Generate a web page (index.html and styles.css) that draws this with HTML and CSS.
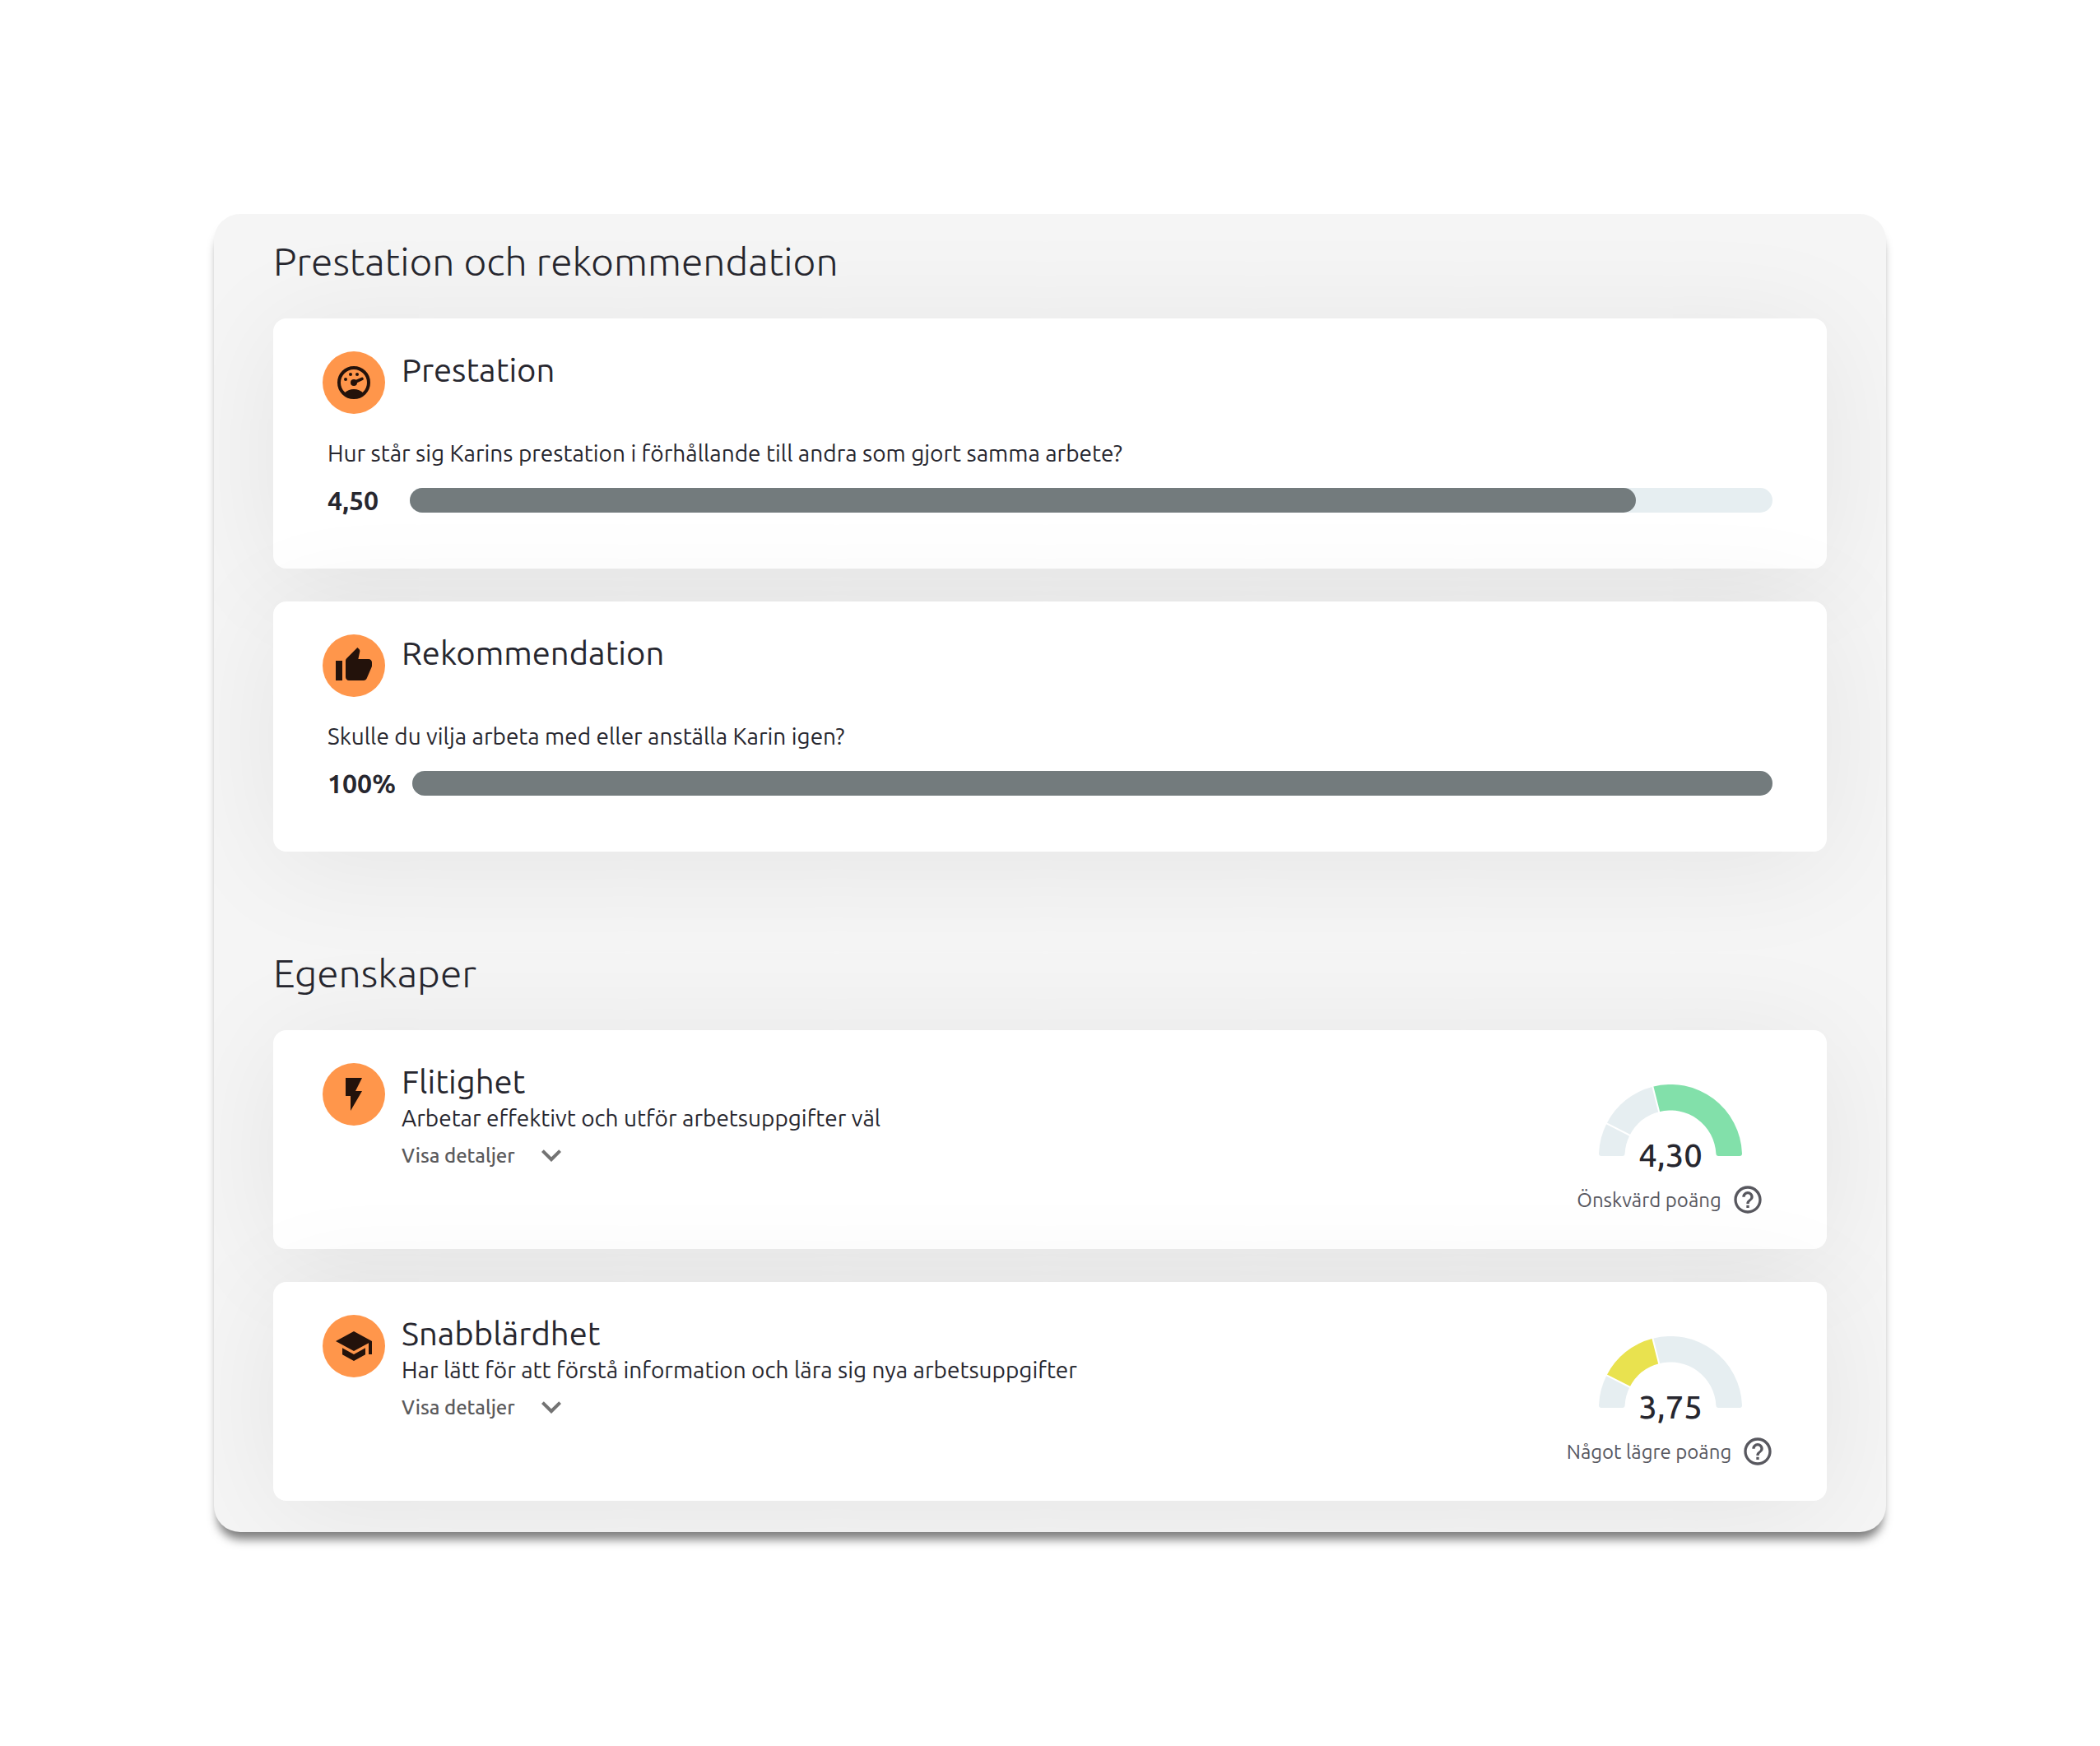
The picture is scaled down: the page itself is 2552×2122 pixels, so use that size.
FILE: index.html
```html
<!DOCTYPE html>
<html lang="sv">
<head>
    <meta charset="UTF-8">
    <meta name="viewport" content="width=device-width, initial-scale=1.0">
    <title>Prestation och rekommendation</title>
    <link rel="stylesheet" href="styles.css">
</head>
<body>
    <main class="panel">
        <section class="section">
            <h1 class="section-title">Prestation och rekommendation</h1>

            <article class="card">
                <div class="card-header">
                    <span class="badge">
                        <svg viewBox="0 0 24 24" aria-hidden="true">
                            <circle cx="12" cy="12" r="9" fill="none" stroke="currentColor" stroke-width="2"/>
                            <path d="M6.2 18.4C7.700 16.800 9.700 16 12 16s4.300.8 5.800 2.400C16.300 20.200 14.300 21 12 21s-4.300-.8-5.800-2.600z"/>
                            <circle cx="12" cy="12" r="2"/>
                            <path d="M12 12l5-2.300" fill="none" stroke="currentColor" stroke-width="1.800" stroke-linecap="round"/>
                            <circle cx="7" cy="10" r="1"/>
                            <circle cx="10" cy="7" r="1"/>
                            <circle cx="14" cy="7" r="1"/>
                        </svg>
                    </span>
                    <h2 class="card-title">Prestation</h2>
                </div>
                <p class="question">Hur står sig Karins prestation i förhållande till andra som gjort samma arbete?</p>
                <div class="score">
                    <span class="score-value">4,50</span>
                    <div class="bar"><div class="bar-fill" style="width: 90%"></div></div>
                </div>
            </article>

            <article class="card">
                <div class="card-header">
                    <span class="badge">
                        <svg viewBox="0 0 24 24" aria-hidden="true">
                            <path d="M1 21h4V9H1v12zm22-11c0-1.100-.9-2-2-2h-6.310l.95-4.570.03-.32c0-.41-.17-.79-.44-1.060L14.170 1 7.590 7.590C7.220 7.950 7 8.450 7 9v10c0 1.100.9 2 2 2h9c.83 0 1.540-.5 1.840-1.220l3.020-7.050c.09-.23.14-.47.14-.73v-2z"/>
                        </svg>
                    </span>
                    <h2 class="card-title">Rekommendation</h2>
                </div>
                <p class="question">Skulle du vilja arbeta med eller anställa Karin igen?</p>
                <div class="score">
                    <span class="score-value">100%</span>
                    <div class="bar"><div class="bar-fill" style="width: 100%"></div></div>
                </div>
            </article>
        </section>

        <section class="section">
            <h1 class="section-title">Egenskaper</h1>

            <article class="card trait">
                <span class="badge">
                    <svg viewBox="0 0 24 24" aria-hidden="true">
                        <path d="M7 2v11h3v9l7-12h-4l4-8z"/>
                    </svg>
                </span>
                <div class="trait-info">
                    <h2 class="card-title">Flitighet</h2>
                    <p class="trait-text">Arbetar effektivt och utför arbetsuppgifter väl</p>
                    <button class="details" type="button">
                        Visa detaljer
                        <svg viewBox="0 0 24 24" aria-hidden="true"><path d="M16.590 8.590L12 13.170 7.410 8.590 6 10l6 6 6-6z"/></svg>
                    </button>
                </div>
                <div class="result">
                    <div class="gauge">
                        <svg viewBox="0 0 174 114" aria-hidden="true">
                            <path class="seg" d="M3 87Q0 87 0 84A87 87 0 0 1 9.500 47.500L37.500 61.800A55.500 55.500 0 0 0 31.600 84Q31.500 87 28.500 87Z"/>
                            <path class="seg" d="M9.500 47.500A87 87 0 0 1 65.400 2.700L73.200 33.200A55.500 55.500 0 0 0 37.500 61.800Z"/>
                            <path class="seg seg-high" d="M65.400 2.700A87 87 0 0 1 174 84Q174 87 171 87H145.500Q142.500 87 142.400 84A55.500 55.500 0 0 0 73.200 33.200Z"/>
                            <path class="gap" d="M7 46.200L40 63M65 1L73.600 35"/>
                        </svg>
                        <span class="gauge-value">4,30</span>
                    </div>
                    <div class="result-label">
                        <span>Önskvärd poäng</span>
                        <button class="help" type="button" aria-label="Hjälp">
                            <svg viewBox="0 0 24 24" aria-hidden="true"><path d="M11 18h2v-2h-2v2zm1-16C6.480 2 2 6.480 2 12s4.480 10 10 10 10-4.480 10-10S17.520 2 12 2zm0 18c-4.410 0-8-3.590-8-8s3.590-8 8-8 8 3.590 8 8-3.590 8-8 8zm0-14c-2.210 0-4 1.790-4 4h2c0-1.100.9-2 2-2s2 .9 2 2c0 2-3 1.750-3 5h2c0-2.250 3-2.500 3-5 0-2.210-1.790-4-4-4z"/></svg>
                        </button>
                    </div>
                </div>
            </article>

            <article class="card trait">
                <span class="badge">
                    <svg viewBox="0 0 24 24" aria-hidden="true">
                        <path d="M5 13.180v4L12 21l7-3.820v-4L12 17l-7-3.820zM12 3L1 9l11 6 9-4.910V17h2V9L12 3z"/>
                    </svg>
                </span>
                <div class="trait-info">
                    <h2 class="card-title">Snabblärdhet</h2>
                    <p class="trait-text">Har lätt för att förstå information och lära sig nya arbetsuppgifter</p>
                    <button class="details" type="button">
                        Visa detaljer
                        <svg viewBox="0 0 24 24" aria-hidden="true"><path d="M16.590 8.590L12 13.170 7.410 8.590 6 10l6 6 6-6z"/></svg>
                    </button>
                </div>
                <div class="result">
                    <div class="gauge">
                        <svg viewBox="0 0 174 114" aria-hidden="true">
                            <path class="seg" d="M3 87Q0 87 0 84A87 87 0 0 1 9.500 47.500L37.500 61.800A55.500 55.500 0 0 0 31.600 84Q31.500 87 28.500 87Z"/>
                            <path class="seg seg-mid" d="M9.500 47.500A87 87 0 0 1 65.400 2.700L73.200 33.200A55.500 55.500 0 0 0 37.500 61.800Z"/>
                            <path class="seg" d="M65.400 2.700A87 87 0 0 1 174 84Q174 87 171 87H145.500Q142.500 87 142.400 84A55.500 55.500 0 0 0 73.200 33.200Z"/>
                            <path class="gap" d="M7 46.200L40 63M65 1L73.600 35"/>
                        </svg>
                        <span class="gauge-value">3,75</span>
                    </div>
                    <div class="result-label">
                        <span>Något lägre poäng</span>
                        <button class="help" type="button" aria-label="Hjälp">
                            <svg viewBox="0 0 24 24" aria-hidden="true"><path d="M11 18h2v-2h-2v2zm1-16C6.480 2 2 6.480 2 12s4.480 10 10 10 10-4.480 10-10S17.520 2 12 2zm0 18c-4.410 0-8-3.590-8-8s3.590-8 8-8 8 3.590 8 8-3.590 8-8 8zm0-14c-2.210 0-4 1.790-4 4h2c0-1.100.9-2 2-2s2 .9 2 2c0 2-3 1.750-3 5h2c0-2.250 3-2.500 3-5 0-2.210-1.790-4-4-4z"/></svg>
                        </button>
                    </div>
                </div>
            </article>
        </section>
    </main>
</body>
</html>
```
FILE: styles.css
```css
* {
    margin: 0;
    padding: 0;
    box-sizing: border-box;
}

body {
    font-family: Ubuntu, "Noto Sans", "Open Sans", sans-serif;
    font-size: 28px;
    color: #27272f;
    background-color: #fff;
    padding: 260px;
}

svg {
    display: block;
    fill: currentColor;
}

button {
    font: inherit;
    color: inherit;
    background: none;
    border: none;
    cursor: pointer;
}

.panel {
    display: flex;
    flex-direction: column;
    gap: 117px;
    padding: 27px 72px 38px;
    overflow: hidden;
    background-color: #f5f5f5;
    border-radius: 32px;
    box-shadow: 0 13px 12px -4px rgba(0, 0, 0, 0.5);
}

.section {
    display: flex;
    flex-direction: column;
    gap: 40px;
}

.section-title {
    font-size: 48px;
    font-weight: 300;
    line-height: 60px;
}

.card {
    padding: 40px 60px 63px;
    background-color: #fff;
    border-radius: 16px;
    box-shadow: 0 14px 140px rgba(0, 0, 0, 0.07);
}

.card-header {
    display: flex;
    gap: 20px;
}

.card-title {
    font-size: 40px;
    font-weight: 400;
    line-height: 46px;
}

.badge {
    display: flex;
    flex-shrink: 0;
    justify-content: center;
    align-items: center;
    width: 76px;
    height: 76px;
    border-radius: 50%;
    color: #23120b;
    background-color: #ff964b;
}

.badge svg {
    width: 48px;
    height: 48px;
}

.question {
    margin-top: 27px;
    padding: 0 6px;
    line-height: 42px;
}

.score {
    display: flex;
    align-items: center;
    gap: 20px;
    margin-top: 16px;
    padding: 0 6px;
    line-height: 40px;
}

.score-value {
    min-width: 80px;
    font-size: 32px;
    font-weight: 700;
}

.bar {
    flex: 1;
    height: 30px;
    border-radius: 15px;
    background-color: #e6eef1;
}

.bar-fill {
    height: 100%;
    border-radius: 15px;
    background-color: #737b7d;
}

.trait {
    display: flex;
    gap: 20px;
    padding-bottom: 40px;
}

.trait-info {
    flex: 1;
}

.trait-text {
    line-height: 42px;
}

.details {
    display: flex;
    align-items: center;
    gap: 20px;
    height: 48px;
    font-size: 24px;
    font-weight: 500;
    color: #5a5a5c;
}

.details svg {
    width: 48px;
    height: 48px;
    fill: #737373;
}

.result {
    display: flex;
    flex-direction: column;
    align-items: center;
    gap: 6px;
    width: 260px;
    padding-top: 26px;
}

.gauge {
    display: grid;
    justify-items: center;
    align-items: end;
}

.gauge svg,
.gauge-value {
    grid-area: 1 / 1;
}

.gauge svg {
    width: 174px;
    height: 114px;
}

.gauge-value {
    font-size: 40px;
    font-weight: 500;
    line-height: 56px;
}

.seg {
    fill: #e6eef1;
}

.seg-high {
    fill: #82e0aa;
}

.seg-mid {
    fill: #e9e24f;
}

.gap {
    fill: none;
    stroke: #fff;
    stroke-width: 2;
}

.result-label {
    display: flex;
    align-items: center;
    gap: 12px;
    height: 40px;
    font-size: 24px;
    white-space: nowrap;
    color: #58585f;
}

.help svg {
    width: 40px;
    height: 40px;
}
```
